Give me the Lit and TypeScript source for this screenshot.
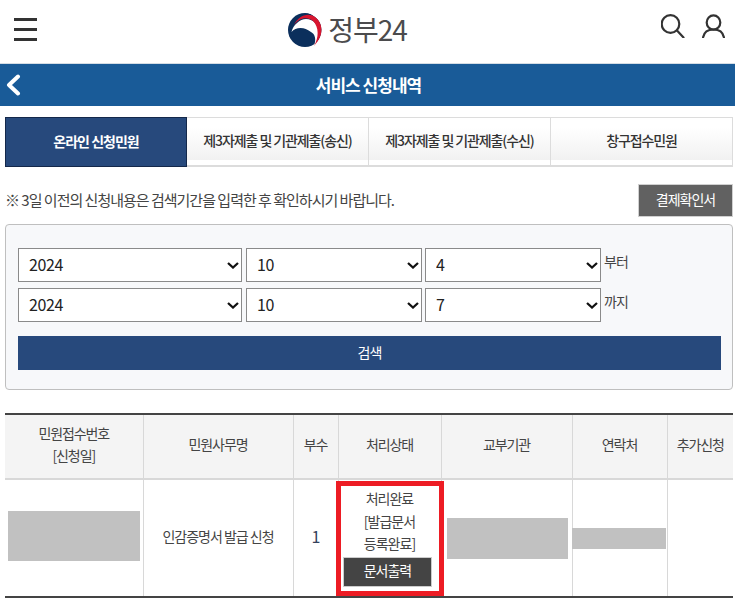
import { LitElement, html, css } from "lit";
import { customElement } from "lit/decorators.js";

const chevron = "data:image/svg+xml," + encodeURIComponent('<svg xmlns="http://www.w3.org/2000/svg" width="12" height="7" viewBox="0 0 12 7"><path d="M1 1l5 4.500 5-4.500" fill="none" stroke="#111" stroke-width="2.300"/></svg>');

@customElement("app-root")
export class AppRoot extends LitElement {
  static styles = css`
    :host { display: block; width: 735px; height: 601px; overflow: hidden; background: #fff;
      font-family: "Noto Sans CJK KR", "Noto Sans", sans-serif; color: #444; font-size: 14px; letter-spacing: -1px; }
    * { box-sizing: border-box; }
    .top { height: 63px; display: flex; align-items: flex-start; padding: 0 10px 0 14px; position: relative; }
    .burger { width: 23px; display: flex; flex-direction: column; gap: 7.5px; margin-top: 18px; }
    .burger i { display: block; height: 2.5px; background: #333; }
    .logo { flex: 1; display: flex; justify-content: center; align-items: center; gap: 6px; height: 60px; padding-right: 3px; }
    .logo span { font-size: 28px; color: #4b4b4d; letter-spacing: -1px; font-weight: 400; line-height: 1; padding-bottom: 2px; }
    .icons { display: flex; gap: 17px; margin-top: 14px; }
    .bar { height: 43px; background: #195b98; border-top: 1px solid #d5dde5; display: flex; align-items: center; justify-content: center; position: relative; color: #fff; font-size: 17px; font-weight: 700; padding-left: 2px; padding-bottom: 1px; }
    .back { position: absolute; left: 5px; top: 10px; }
    .tabs { display: grid; grid-template-columns: repeat(4, 182px); margin: 11px 2px 0 5px; height: 50px; }
    .tab { border-style: solid; border-color: #dcdcdc; border-width: 1px 1px 2px 0; display: flex; align-items: center; justify-content: center; font-weight: 500; color: #333; padding-bottom: 3px; letter-spacing: -1.1px;
      background: linear-gradient(#fff 0, #fff 20%, #f1f1f1 90%, #fff 90%); }
    .tab.on { background: #27497c; color: #fff; border: 1px solid #14284a; font-weight: 700; letter-spacing: -1px; }
    .notice-row { display: flex; justify-content: space-between; align-items: center; margin: 17px 2px 0 5px; height: 33px; }
    .notice { color: #444; font-size: 15px; padding-bottom: 2px; }
    .pay { width: 95px; height: 33px; background: #616161; color: #fff; display: flex; align-items: center; justify-content: center; border: 1px solid #d0d0d0; padding-bottom: 3px; }
    .panel { margin: 7px 2px 0 5px; height: 166px; background: #f7f8fa; border: 1px solid #bfbfbf; border-radius: 4px; padding: 23px 11px 0 12px; }
    .row { display: flex; gap: 4px; align-items: center; height: 34px; margin-bottom: 6px; }
    select { appearance: none; -webkit-appearance: none; height: 34px; border: 1px solid #8a8a8a; border-radius: 0; font-family: inherit; font-size: 16px; letter-spacing: -0.4px; color: #222; padding: 0 0 3px 10px;
      background: #fff var(--chev) no-repeat right 2.5px center; }
    .s1 { width: 224px; } .s2 { width: 176px; } .s3 { width: 176px; margin-left: -1px; }
    .unit { font-size: 14px; margin-left: -1px; margin-top: -8px; }
    .search { margin-top: 14px; height: 34px; background: #27497c; color: #fff; display: flex; align-items: center; justify-content: center; padding-bottom: 3px; }
    table { border-collapse: collapse; table-layout: fixed; width: 728px; margin: 23px 2px 0 5px; border-top: 2px solid #444; }
    th { background: #f4f4f4; font-weight: 400; height: 65px; border-bottom: 2px solid #d8d8d8; border-left: 1px solid #d8d8d8; line-height: 22px; color: #444; padding: 0 0 5px; letter-spacing: -1.1px; }
    td { height: 117px; border-left: 1px solid #d8d8d8; text-align: center; padding: 0; border-bottom: 2px solid #444; vertical-align: middle; position: relative; color: #444; }
    th:first-child, td:first-child { border-left: 0; }
    .up { padding-bottom: 5px; }
    .n { font-size: 16px; color: #33415c; }
    .mask { background: #c1c1c1; margin: 0 auto; }
    .m1 { width: 132px; height: 50px; margin-left: 3px; }
    .m2 { width: 121px; height: 41px; margin-left: 5px; }
    .m3 { width: 94px; height: 21px; margin-left: -1px; }
    .status { line-height: 22.5px; padding: 7px 0 0; height: 116px; display: flex; flex-direction: column; align-items: center; }
    .print { width: 89px; height: 30px; margin: 2px 0 0 -4px; background: #444; color: #fff; border: 1px solid #ccc; display: flex; align-items: center; justify-content: center; padding-bottom: 2px; }
    .red { position: absolute; inset: 1px -3px 0 -3px; border: 5px solid #ed1c24; pointer-events: none; }
  `;

  render() {
    const sel = (cls: string, v: string) => html`<select class=${cls} style="--chev:url('${chevron}')"><option>${v}</option></select>`;
    return html`
      <div class="top">
        <div class="burger"><i></i><i></i><i></i></div>
        <div class="logo">
          <svg width="34" height="34" viewBox="0 0 34 34">
            <circle cx="17" cy="17" r="17" fill="#0b2f5c"/>
            <path d="M18 -1H35V35H26V33C36.500 22 35 10 27 4C24 1.500 21 0 18 -.5Z" fill="#fff"/>
            <path d="M3.500 19C5 12 12 6 18 6C26 6 31 13 31 20C31 25 28.500 30 26 33C28.500 26 27 21 23 19C19 16.500 16.500 15 12.500 15C9 15 5.500 16.500 3.500 19Z" fill="#fff"/>
            <path d="M6 12C10 3 20 -1 27 4C35 10 36.500 22 26 33C31 24 31 14 25 8C19 3 11 5 6 12Z" fill="#d8152f"/>
          </svg>
          <span>정부24</span>
        </div>
        <div class="icons">
          <svg width="24" height="24" viewBox="0 0 24 24" fill="none" stroke="#333" stroke-width="2.200"><circle cx="9.500" cy="10" r="8.800"/><path d="M16 16.500l6.500 7" stroke-linecap="round"/></svg>
          <svg width="23" height="24" viewBox="0 0 23 24" fill="none" stroke="#333" stroke-width="2.200"><ellipse cx="11.500" cy="8.500" rx="6.800" ry="7.200"/><path d="M1 23.500C2 18 6 15.500 11.500 15.500C17 15.500 21 18 22 23.500" stroke-linecap="round"/></svg>
        </div>
      </div>
      <div class="bar">
        <svg class="back" width="16" height="22" viewBox="0 0 16 22" fill="none" stroke="#fff" stroke-width="4" stroke-linecap="round" stroke-linejoin="round"><path d="M13 2.500L4 11l9 8.500"/></svg>
        서비스 신청내역
      </div>
      <div class="tabs">
        <div class="tab on">온라인 신청민원</div>
        <div class="tab">제3자제출 및 기관제출(송신)</div>
        <div class="tab">제3자제출 및 기관제출(수신)</div>
        <div class="tab">창구접수민원</div>
      </div>
      <div class="notice-row">
        <div class="notice">※ 3일 이전의 신청내용은 검색기간을 입력한 후 확인하시기 바랍니다.</div>
        <div class="pay">결제확인서</div>
      </div>
      <div class="panel">
        <div class="row">${sel("s1", "2024")}${sel("s2", "10")}${sel("s3", "4")}<span class="unit">부터</span></div>
        <div class="row">${sel("s1", "2024")}${sel("s2", "10")}${sel("s3", "7")}<span class="unit">까지</span></div>
        <div class="search">검색</div>
      </div>
      <table>
        <colgroup><col style="width:138px"/><col style="width:150px"/><col style="width:45px"/><col style="width:103px"/><col style="width:131px"/><col style="width:95px"/><col style="width:66px"/></colgroup>
        <thead><tr><th>민원접수번호<br/>[신청일]</th><th>민원사무명</th><th>부수</th><th>처리상태</th><th>교부기관</th><th>연락처</th><th>추가신청</th></tr></thead>
        <tbody><tr>
          <td class="up"><div class="mask m1"></div></td>
          <td class="up">인감증명서 발급 신청</td>
          <td class="n up">1</td>
          <td><div class="status">처리완료<br/>[발급문서<br/>등록완료]<div class="print">문서출력</div></div><div class="red"></div></td>
          <td><div class="mask m2"></div></td>
          <td><div class="mask m3"></div></td>
          <td></td>
        </tr></tbody>
      </table>
    `;
  }
}
